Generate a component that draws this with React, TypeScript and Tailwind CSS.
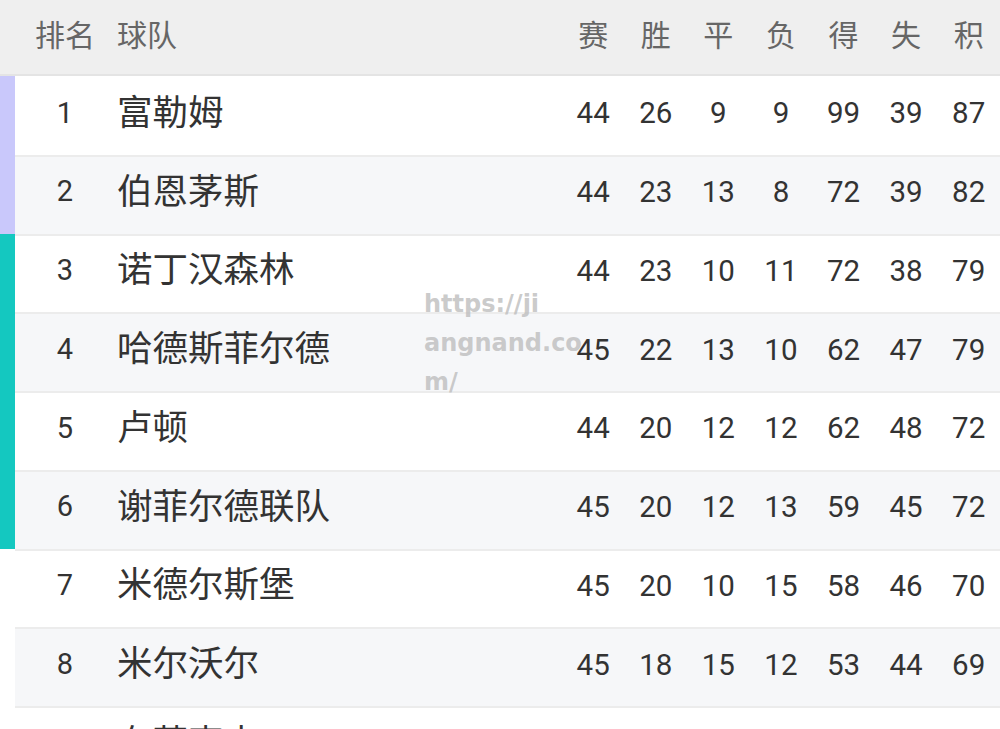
const rows = [
  { rank: 1, team: "富勒姆", stats: [44, 26, 9, 9, 99, 39, 87], bar: "bg-[#c9c8fb]" },
  { rank: 2, team: "伯恩茅斯", stats: [44, 23, 13, 8, 72, 39, 82], bar: "bg-[#c9c8fb]" },
  { rank: 3, team: "诺丁汉森林", stats: [44, 23, 10, 11, 72, 38, 79], bar: "bg-[#14c8c0]" },
  { rank: 4, team: "哈德斯菲尔德", stats: [45, 22, 13, 10, 62, 47, 79], bar: "bg-[#14c8c0]" },
  { rank: 5, team: "卢顿", stats: [44, 20, 12, 12, 62, 48, 72], bar: "bg-[#14c8c0]" },
  { rank: 6, team: "谢菲尔德联队", stats: [45, 20, 12, 13, 59, 45, 72], bar: "bg-[#14c8c0]" },
  { rank: 7, team: "米德尔斯堡", stats: [45, 20, 10, 15, 58, 46, 70], bar: "bg-white" },
  { rank: 8, team: "米尔沃尔", stats: [45, 18, 15, 12, 53, 44, 69], bar: "bg-white" },
  { rank: 9, team: "布莱克本", stats: [45, 18, 12, 15, 57, 49, 66], bar: "bg-white" },
];

const heads = ["赛", "胜", "平", "负", "得", "失", "积"];

export default function App() {
  return (
    <div className="relative h-[729px] w-[1000px] overflow-hidden bg-white font-['Roboto','Noto_Sans_CJK_SC',sans-serif] text-[#333]">
      {/* Header */}
      <div className="flex h-[76px] items-center border-b-2 border-[#e4e4e4] bg-[#efefef] pb-[4px] text-[30px] text-[#666]">
        <div className="w-[15px]" />
        <div className="w-[100px] text-center">排名</div>
        <div className="flex-1 pl-[2px]">球队</div>
        {heads.map((h) => (
          <div key={h} className="w-[62.6px] text-center">
            {h}
          </div>
        ))}
      </div>

      {rows.map((r, i) => (
        <div key={r.rank} className="flex h-[78.75px]">
          <div className={`w-[15px] ${r.bar}`} />
          <div
            className={`flex flex-1 items-center border-t-2 pb-[6px] ${
              i % 2 === 0 ? "bg-white" : "bg-[#f6f7f9]"
            } ${i === 0 ? "border-transparent" : "border-[#ececec]"}`}
          >
            <div className="w-[100px] text-center text-[29px]">{r.rank}</div>
            <div className="flex-1 pl-[2px] text-[35.5px]">{r.team}</div>
            {r.stats.map((s, j) => (
              <div key={j} className="w-[62.6px] text-center text-[29.5px]">
                {s}
              </div>
            ))}
          </div>
        </div>
      ))}

      {/* Watermark */}
      <div className="absolute left-[424px] top-[285px] font-['DejaVu_Sans',sans-serif] text-[24px] font-bold leading-[39px] text-[#bdbdbd]/80">
        https://ji
        <br />
        angnand.co
        <br />
        m/
      </div>
    </div>
  );
}
